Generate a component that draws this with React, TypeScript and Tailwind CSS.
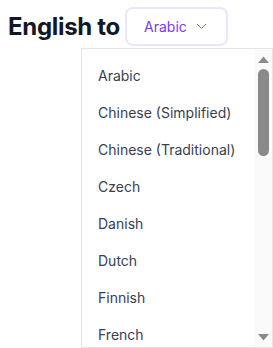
import React, { useState } from "react";

const languages = [
  "Arabic",
  "Chinese (Simplified)",
  "Chinese (Traditional)",
  "Czech",
  "Danish",
  "Dutch",
  "Finnish",
  "French",
];

const App = () => {
  const [lang, setLang] = useState("Arabic");
  return (
    <div className="relative w-[273px] h-[348px] bg-white overflow-hidden font-['Inter',sans-serif]">
      <div className="flex flex-row items-center pl-2 pt-[7px] gap-[5px]">
        <h2 className="text-[24px] leading-[30px] font-bold text-[#111827] tracking-[-0.3px]">English to</h2>
        <button className="flex flex-row items-center gap-[9px] h-[39px] w-[103px] pl-[17px] rounded-lg border-2 border-[#ebe5fd] text-[14px] text-[#7c3aed]">
          {lang}
          <svg width="11" height="7" viewBox="0 0 11 7" fill="none">
            <path d="M1 1l4.5 4.5L10 1" stroke="#8b5cf6" strokeWidth="1" />
          </svg>
        </button>
      </div>
      <div className="absolute left-[81px] top-[48px] w-[192px] h-[300px] flex flex-row bg-white border border-[#e5e5e5]">
        <ul className="flex-1 flex flex-col overflow-hidden pt-[16px]">
          {languages.map((l) => (
            <li
              key={l}
              onClick={() => setLang(l)}
              className="shrink-0 h-[37px] pl-4 text-[14px] leading-[22px] text-[#374151]"
            >
              {l}
            </li>
          ))}
        </ul>
        <div className="w-[18px] flex flex-col items-center bg-[#fafafa]">
          <svg width="11" height="7" viewBox="0 0 11 7" className="mt-[7px]">
            <path d="M0 7L5.5 0.5 11 7z" fill="#8a8a8a" />
          </svg>
          <div className="mt-[6px] w-[11px] h-[87px] rounded-full bg-[#8a8a8a]" />
          <div className="flex-1" />
          <svg width="11" height="7" viewBox="0 0 11 7" className="mb-[6px]">
            <path d="M0 0L5.5 6.5 11 0z" fill="#8a8a8a" />
          </svg>
        </div>
      </div>
    </div>
  );
};

export default App;
